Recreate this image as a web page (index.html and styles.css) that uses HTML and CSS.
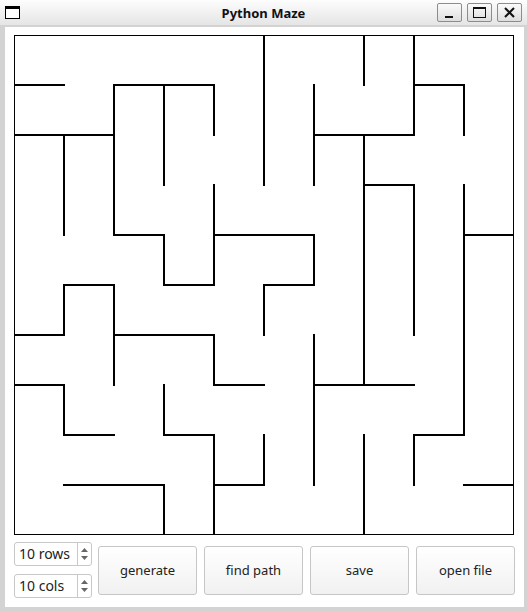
FILE: index.html
```html
<!DOCTYPE html>
<html lang="en">
<head>
    <meta charset="UTF-8">
    <title>Python Maze</title>
    <link rel="stylesheet" href="styles.css">
</head>
<body>
    <div class="window">
        <div class="titlebar">
            <div class="title-left">
                <span class="app-icon"></span>
            </div>
            <div class="title">Python Maze</div>
            <div class="title-right">
                <span class="wbtn">
                    <svg width="25" height="19" viewBox="0 0 25 19"><rect x="8" y="13" width="8" height="2" fill="#111"/></svg>
                </span>
                <span class="wbtn">
                    <svg width="25" height="19" viewBox="0 0 25 19"><rect x="6.5" y="4.5" width="12" height="10" fill="none" stroke="#111"/><rect x="6" y="4" width="13" height="2" fill="#111"/></svg>
                </span>
                <span class="wbtn">
                    <svg width="25" height="19" viewBox="0 0 25 19"><path d="M8 5 L17 14 M17 5 L8 14" stroke="#111" stroke-width="2"/></svg>
                </span>
            </div>
        </div>

        <div class="frame">
            <div class="content">
                <svg class="maze" width="502" height="502" viewBox="13 34 502 502">
                    <defs>
                        <clipPath id="inside"><rect x="14" y="35" width="500" height="500"/></clipPath>
                    </defs>
                    <rect x="14.5" y="35.5" width="499" height="499" fill="#fff" stroke="#000" stroke-width="1"/>
                    <g id="walls" stroke="#000" stroke-width="2" stroke-linecap="square" clip-path="url(#inside)"></g>
                </svg>

                <div class="controls">
                    <div class="spins">
                        <div class="spin">
                            <span class="spin-value">10 rows</span>
                            <span class="spin-arrows">
                                <svg width="13" height="22" viewBox="0 0 13 22"><path d="M3 9 L6.5 5 L10 9 Z" fill="#666"/><path d="M3 13 L6.5 17 L10 13 Z" fill="#666"/></svg>
                            </span>
                        </div>
                        <div class="spin">
                            <span class="spin-value">10 cols</span>
                            <span class="spin-arrows">
                                <svg width="13" height="22" viewBox="0 0 13 22"><path d="M3 9 L6.5 5 L10 9 Z" fill="#666"/><path d="M3 13 L6.5 17 L10 13 Z" fill="#666"/></svg>
                            </span>
                        </div>
                    </div>
                    <button class="btn">generate</button>
                    <button class="btn">find path</button>
                    <button class="btn">save</button>
                    <button class="btn">open file</button>
                </div>
            </div>
        </div>
    </div>

    <script>
        // walls in screen pixels: [x1, y1, x2, y2]
        const walls = [
            [264, 35, 264, 185], [364, 35, 364, 85], [414, 35, 414, 135],
            [114, 85, 114, 235], [164, 85, 164, 185], [214, 85, 214, 135],
            [314, 85, 314, 185], [464, 85, 464, 135], [64, 135, 64, 235],
            [364, 135, 364, 385], [214, 185, 214, 285], [414, 185, 414, 335],
            [464, 185, 464, 435], [164, 235, 164, 285], [314, 235, 314, 285],
            [64, 285, 64, 335], [114, 285, 114, 385], [264, 285, 264, 335],
            [214, 335, 214, 385], [314, 335, 314, 485], [64, 385, 64, 435],
            [164, 385, 164, 435], [264, 435, 264, 485], [414, 435, 414, 485],
            [214, 435, 214, 535], [164, 485, 164, 535], [364, 435, 364, 535],

            [14, 85, 64, 85], [114, 85, 214, 85], [414, 85, 464, 85],
            [14, 135, 114, 135], [314, 135, 414, 135], [364, 185, 414, 185],
            [114, 235, 164, 235], [214, 235, 314, 235], [464, 235, 514, 235],
            [64, 285, 114, 285], [164, 285, 214, 285], [264, 285, 314, 285],
            [14, 335, 64, 335], [114, 335, 214, 335], [14, 385, 64, 385],
            [214, 385, 264, 385], [314, 385, 414, 385], [64, 435, 114, 435],
            [164, 435, 214, 435], [414, 435, 464, 435], [64, 485, 164, 485],
            [214, 485, 264, 485], [464, 485, 514, 485]
        ];

        const g = document.getElementById('walls');
        walls.forEach(function (w) {
            const line = document.createElementNS('http://www.w3.org/2000/svg', 'line');
            line.setAttribute('x1', w[0]);
            line.setAttribute('y1', w[1]);
            line.setAttribute('x2', w[2]);
            line.setAttribute('y2', w[3]);
            g.appendChild(line);
        });
    </script>
</body>
</html>
```

FILE: styles.css
```css
html, body { margin: 0; padding: 0; }
body { font-family: "Noto Sans", "Open Sans", sans-serif; background: #d3d3d3; width: 527px; height: 611px; overflow: hidden; }

.window { width: 527px; height: 611px; display: flex; flex-direction: column; }

.titlebar { height: 25px; display: grid; grid-template-columns: 1fr auto 1fr; align-items: center; background: linear-gradient(#fdfdfd, #e5e5e5); }
.title-left { display: flex; align-items: center; padding-left: 5px; }
.app-icon { width: 13px; height: 9px; border: 1px solid #000; border-top: 3px solid #000; background: #fff; margin-top: 0; }
.title { font-weight: bold; font-size: 13px; color: #111; }
.title-right { display: flex; justify-content: flex-end; gap: 5px; padding-right: 5px; }
.wbtn { width: 25px; height: 19px; box-sizing: border-box; border: 1px solid #8c8c8c; border-radius: 2px; background: linear-gradient(#fbfbfb, #dedede); display: flex; align-items: center; justify-content: center; }
.wbtn svg { display: block; margin: -1px; }

.frame { flex: 1; padding: 2px 3px 4px 5px; display: flex; }
.content { flex: 1; background: #fff; padding: 7px 0 0 8px; }
.maze { display: block; }

.controls { display: flex; align-items: center; gap: 6px; margin-top: 6px; padding-left: 1px; }
.spins { width: 78px; display: flex; flex-direction: column; gap: 8px; margin-right: 0; }
.spin { height: 24px; box-sizing: border-box; border: 1px solid #c8c8c8; border-radius: 3px; display: flex; align-items: center; background: #fff; }
.spin-value { flex: 1; font-size: 14px; color: #222; padding-left: 4px; line-height: 20px; }
.spin-arrows { width: 13px; height: 22px; border-left: 1px solid #c8c8c8; display: flex; }
.spin-arrows svg { display: block; }

.btn { width: 99px; height: 49px; box-sizing: border-box; border: 1px solid #c6c6c6; border-radius: 3px; background: linear-gradient(#ffffff, #f1f1f1); font-family: "Noto Sans", "Open Sans", sans-serif; font-size: 13px; color: #222; padding: 0; margin: 0; }
.btn + .btn { margin-left: 1px; }
```
